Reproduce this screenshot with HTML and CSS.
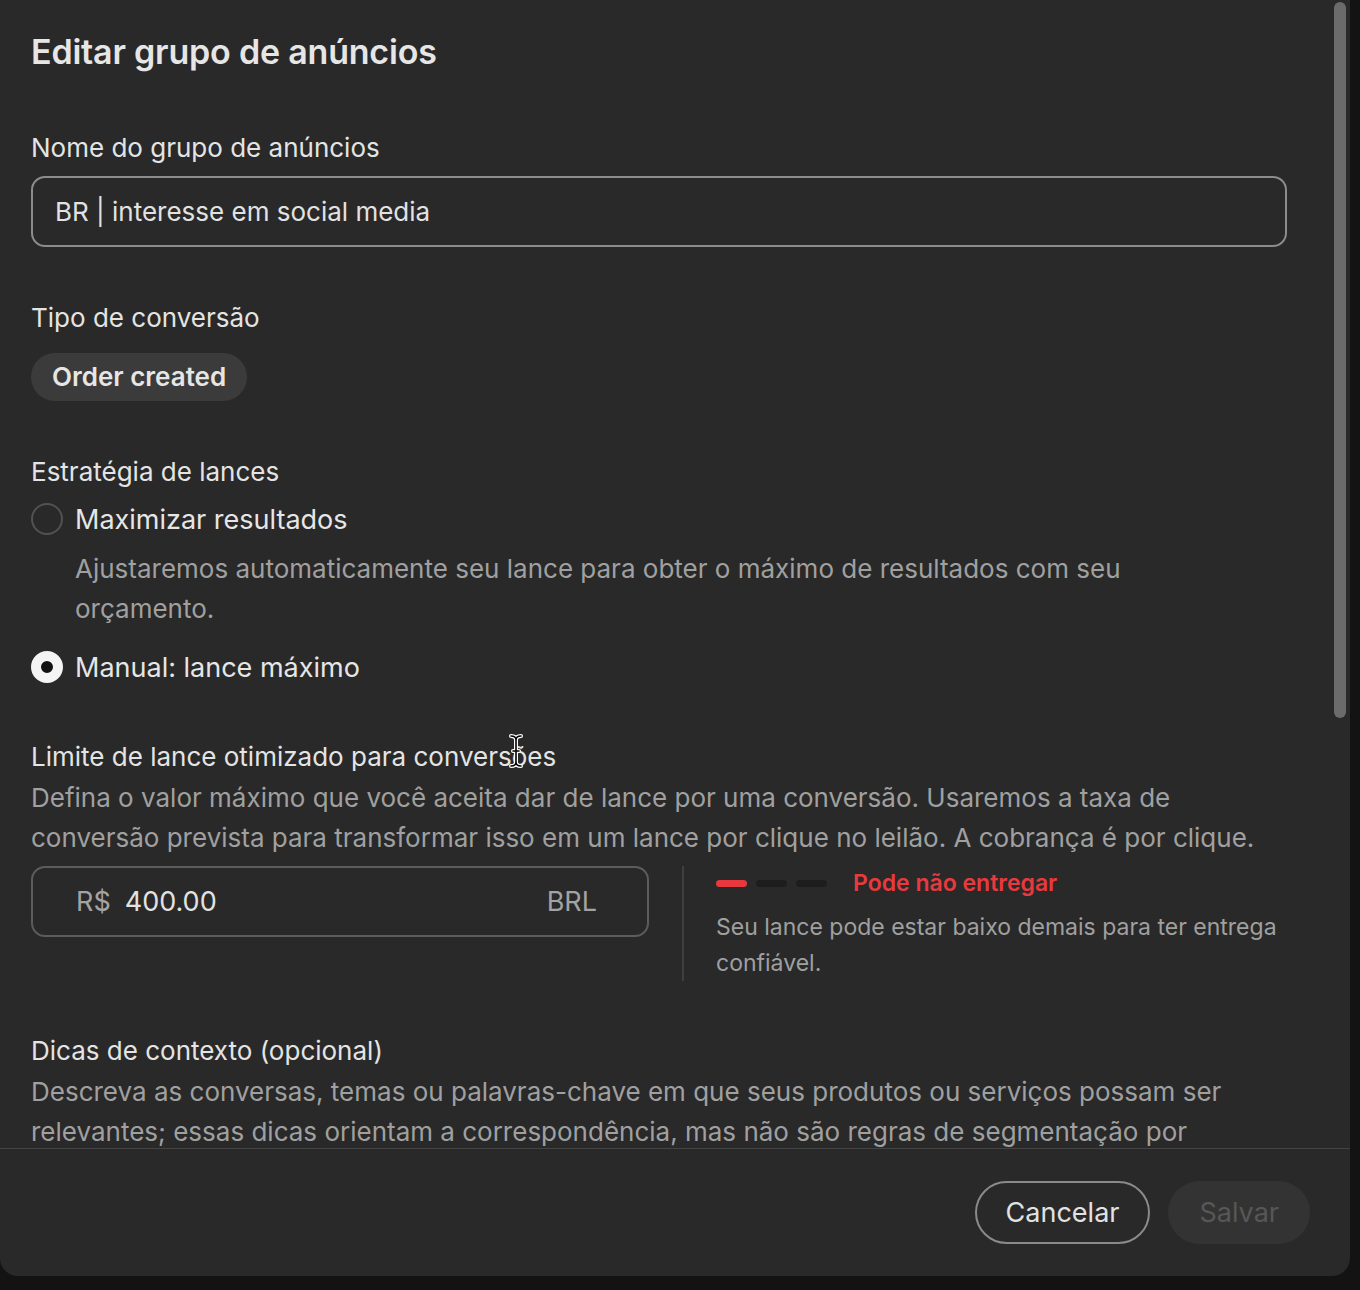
FILE: index.html
```html
<!DOCTYPE html>
<html lang="pt-BR">
<head>
  <meta charset="UTF-8">
  <title>Editar grupo de anúncios</title>
  <link rel="stylesheet" href="styles.css">
</head>
<body>
  <div class="modal">
    <div class="modal-body">
      <h1 class="modal-title">Editar grupo de anúncios</h1>

      <div class="field">
        <label class="field-label" for="adGroupName">Nome do grupo de anúncios</label>
        <input id="adGroupName" class="text-input" type="text" value="BR | interesse em social media">
      </div>

      <div class="field">
        <div class="field-label">Tipo de conversão</div>
        <span class="chip">Order created</span>
      </div>

      <div class="field strategy">
        <div class="field-label">Estratégia de lances</div>
        <label class="radio-row">
          <span class="radio"></span>
          <span class="radio-text">Maximizar resultados</span>
        </label>
        <p class="radio-help">Ajustaremos automaticamente seu lance para obter o máximo de resultados com seu orçamento.</p>
        <label class="radio-row checked">
          <span class="radio"></span>
          <span class="radio-text">Manual: lance máximo</span>
        </label>
      </div>

      <div class="field bid">
        <div class="field-label">Limite de lance otimizado para conversões</div>
        <p class="field-help">Defina o valor máximo que você aceita dar de lance por uma conversão. Usaremos a taxa de conversão prevista para transformar isso em um lance por clique no leilão. A cobrança é por clique.</p>
        <div class="bid-row">
          <div class="money-input">
            <span class="currency">R$</span>
            <span class="amount">400.00</span>
            <span class="code">BRL</span>
          </div>
          <div class="bid-hint">
            <div class="meter">
              <span class="seg on"></span>
              <span class="seg"></span>
              <span class="seg"></span>
              <span class="meter-label">Pode não entregar</span>
            </div>
            <p class="hint-text">Seu lance pode estar baixo demais para ter entrega confiável.</p>
          </div>
        </div>
      </div>

      <div class="field">
        <div class="field-label">Dicas de contexto (opcional)</div>
        <p class="field-help">Descreva as conversas, temas ou palavras-chave em que seus produtos ou serviços possam ser relevantes; essas dicas orientam a correspondência, mas não são regras de segmentação por palavra-chave.</p>
      </div>
    </div>

    <div class="modal-footer">
      <button class="btn btn-outline">Cancelar</button>
      <button class="btn btn-disabled" disabled>Salvar</button>
    </div>

    <div class="scroll-thumb"></div>

    <!-- text cursor -->
    <svg class="cursor" width="14" height="34" viewBox="0 0 14 34">
      <path d="M2 2 C5 2 7 3 7 6 L7 28 C7 31 5 32 2 32 M12 2 C9 2 7 3 7 6 M7 28 C7 31 9 32 12 32 M4 17 L10 17"
            fill="none" stroke="#fff" stroke-width="4" stroke-linecap="round"/>
      <path d="M2 2 C5 2 7 3 7 6 L7 28 C7 31 5 32 2 32 M12 2 C9 2 7 3 7 6 M7 28 C7 31 9 32 12 32 M4 17 L10 17"
            fill="none" stroke="#000" stroke-width="1.6" stroke-linecap="round"/>
    </svg>
  </div>
</body>
</html>
```

FILE: styles.css
```css
html, body {
  margin: 0;
  height: 100%;
  background: #131313;
  font-family: Inter, "Noto Sans", sans-serif;
  color: #e8e8e8;
}

.modal {
  position: relative;
  width: 1350px;
  height: 1276px;
  background: #292929;
  border-radius: 0 0 18px 18px;
  display: flex;
  flex-direction: column;
  overflow: hidden;
}

.modal-body {
  flex: 1;
  overflow: hidden;
  padding: 30px 63px 0 31px;
}

.modal-title {
  margin: 0 0 56px;
  font-size: 34px;
  font-weight: 600;
  line-height: 44px;
  color: #e6e6e6;
  letter-spacing: -0.2px;
}

.field {
  margin-bottom: 53px;
}

.field.strategy {
  margin-bottom: 54px;
}

.field.bid {
  margin-bottom: 52px;
}

.field-label {
  display: block;
  font-size: 26px;
  line-height: 36px;
  color: #e4e4e4;
  margin-bottom: 10px;
}

.text-input {
  box-sizing: border-box;
  width: 100%;
  height: 71px;
  padding: 0 22px;
  background: transparent;
  border: 2px solid #8c8c8c;
  border-radius: 14px;
  font: inherit;
  font-size: 26px;
  color: #e2e2e2;
  outline: none;
}

.chip {
  display: inline-block;
  margin-top: 7px;
  padding: 0 21px;
  height: 48px;
  line-height: 48px;
  border-radius: 24px;
  background: #3b3b3b;
  font-size: 26px;
  font-weight: 600;
  color: #e6e6e6;
}

.radio-row {
  display: flex;
  align-items: center;
  gap: 12px;
  height: 36px;
}

.field-label + .radio-row {
  margin-top: 11px;
}

.radio {
  box-sizing: border-box;
  width: 32px;
  height: 32px;
  border-radius: 50%;
  border: 2px solid #525252;
  flex: none;
}

.radio-row.checked .radio {
  border: 10px solid #f4f4f4;
  background: #111;
}

.radio-text {
  font-size: 27px;
  color: #e6e6e6;
}

.radio-help {
  max-width: 1100px;
  margin: 12px 0 20px 44px;
  font-size: 26px;
  line-height: 40px;
  color: #a0a0a0;
}

.field-help {
  margin: -7px 0 0;
  font-size: 26px;
  line-height: 40px;
  color: #a0a0a0;
}

.bid .field-help {
  margin-bottom: 8px;
}

.bid-row {
  display: flex;
  align-items: flex-start;
  gap: 33px;
}

.money-input {
  box-sizing: border-box;
  width: 618px;
  height: 71px;
  flex: none;
  display: flex;
  align-items: center;
  padding: 0 50px 0 43px;
  border: 2px solid #5c5c5c;
  border-radius: 14px;
  font-size: 27px;
}

.currency {
  color: #a3a3a3;
  margin-right: 14px;
}

.amount {
  color: #e2e2e2;
  flex: 1;
}

.code {
  color: #a3a3a3;
}

.bid-hint {
  border-left: 2px solid #3f3f3f;
  padding: 3px 0 0 32px;
}

.meter {
  display: flex;
  align-items: center;
  gap: 9px;
  height: 28px;
}

.seg {
  width: 31px;
  height: 7px;
  border-radius: 4px;
  background: #1d1d1d;
}

.seg.on {
  background: #e83a3e;
}

.meter-label {
  margin-left: 17px;
  font-size: 23px;
  font-weight: 600;
  color: #e83a3e;
}

.hint-text {
  margin: 12px 0 0;
  font-size: 23px;
  line-height: 36px;
  color: #a0a0a0;
}

.modal-footer {
  flex: none;
  height: 127px;
  border-top: 1px solid #444;
  display: flex;
  justify-content: flex-end;
  align-items: center;
  gap: 18px;
  padding: 0 40px 0 0;
}

.btn {
  height: 63px;
  border-radius: 32px;
  font: inherit;
  font-size: 27px;
}

.btn-outline {
  padding: 0 29px;
  background: transparent;
  border: 2px solid #8a8a8a;
  color: #e2e2e2;
}

.btn-disabled {
  padding: 0 31px;
  background: #333;
  border: none;
  color: #575757;
}

.scroll-thumb {
  position: absolute;
  top: 2px;
  right: 4px;
  width: 12px;
  height: 716px;
  border-radius: 6px;
  background: #6b6b6b;
}

.cursor {
  position: absolute;
  left: 509px;
  top: 734px;
}
```
